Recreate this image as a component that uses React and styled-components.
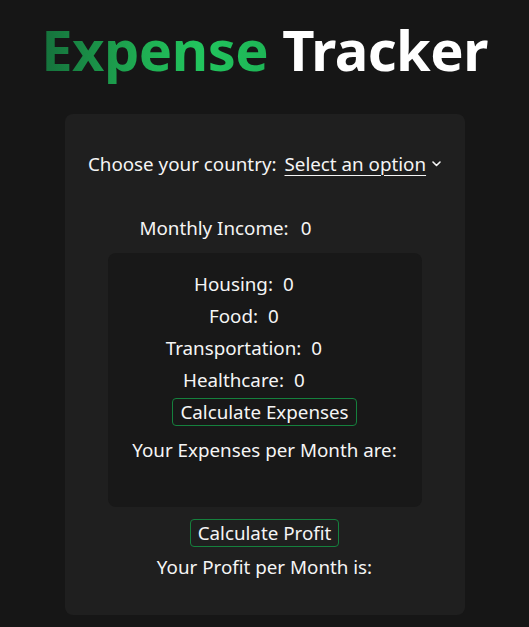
import React from "react";
import styled, { createGlobalStyle } from "styled-components";

const Global = createGlobalStyle`
  html, body { margin: 0; padding: 0; background: #161616; }
  body { font-family: "Noto Sans", "Open Sans", sans-serif; color: #f5f5f5; }
`;

const Page = styled.div`
  display: flex;
  flex-direction: column;
  align-items: center;
  padding-top: 13px;
`;

const Title = styled.h1`
  margin: 0;
  font-size: 56px;
  font-weight: 700;
  line-height: 72px;
  letter-spacing: -0.5px;
  color: #ffffff;
`;

const Accent = styled.span`
  background: linear-gradient(90deg, #15703b 0%, #1fae53 45%, #22c55e 70%, #1eb556 100%);
  -webkit-background-clip: text;
  background-clip: text;
  color: transparent;
`;

const Card = styled.div`
  margin-top: 29px;
  width: 400px;
  box-sizing: border-box;
  background: #1f1f1f;
  border-radius: 8px;
  padding: 38px 0 36px;
  display: flex;
  flex-direction: column;
  align-items: center;
  font-size: 18.8px;
`;

const Row = styled.div`
  display: flex;
  align-items: center;
  gap: ${(p) => p.$gap || 10}px;
  height: 24px;
  line-height: 24px;
  margin-top: ${(p) => p.$mt || 0}px;
`;

const Select = styled.span`
  display: inline-flex;
  align-items: center;
  gap: 6px;
  text-decoration: underline;
  text-underline-offset: 4px;
  text-decoration-thickness: 1px;
`;

const Value = styled.span`
  display: inline-block;
  width: ${(p) => p.$w}px;
`;

const Inner = styled.div`
  margin-top: 13px;
  width: 314px;
  box-sizing: border-box;
  background: #181818;
  border-radius: 8px;
  padding: 19px 0 45px;
  display: flex;
  flex-direction: column;
  align-items: center;
  gap: 8px;
`;

const Button = styled.button`
  font: inherit;
  font-size: 18.8px;
  color: #f5f5f5;
  background: transparent;
  border: 1px solid #15803d;
  border-radius: 4px;
  height: 28px;
  padding: 0 7px;
  line-height: 26px;
  margin-top: ${(p) => p.$mt || 0}px;
  cursor: pointer;
`;

const Result = styled.div`
  line-height: 24px;
  margin-top: ${(p) => p.$mt || 0}px;
`;

const Chevron = () => (
  <svg width="9" height="6" viewBox="0 0 9 6" fill="none" stroke="#f5f5f5" strokeWidth="1.6" strokeLinecap="round" strokeLinejoin="round">
    <path d="M1 1l3.5 3.5L8 1" />
  </svg>
);

const expenses = ["Housing", "Food", "Transportation", "Healthcare"];

export default function App() {
  return (
    <>
      <Global />
      <Page>
        <Title>
          <Accent>Expense</Accent> Tracker
        </Title>
        <Card>
          <Row $gap={8}>
            <span>Choose your country:</span>
            <Select>
              Select an option <Chevron />
            </Select>
          </Row>
          <Row $mt={40} $gap={12}>
            <span>Monthly Income:</span>
            <Value $w={89}>0</Value>
          </Row>
          <Inner>
            {expenses.map((e) => (
              <Row key={e} $gap={10}>
                <span>{e}:</span>
                <Value $w={52}>0</Value>
              </Row>
            ))}
            <Button $mt={-2}>Calculate Expenses</Button>
            <Result $mt={4}>Your Expenses per Month are:</Result>
          </Inner>
          <Button $mt={12}>Calculate Profit</Button>
          <Result $mt={8}>Your Profit per Month is:</Result>
        </Card>
      </Page>
    </>
  );
}
